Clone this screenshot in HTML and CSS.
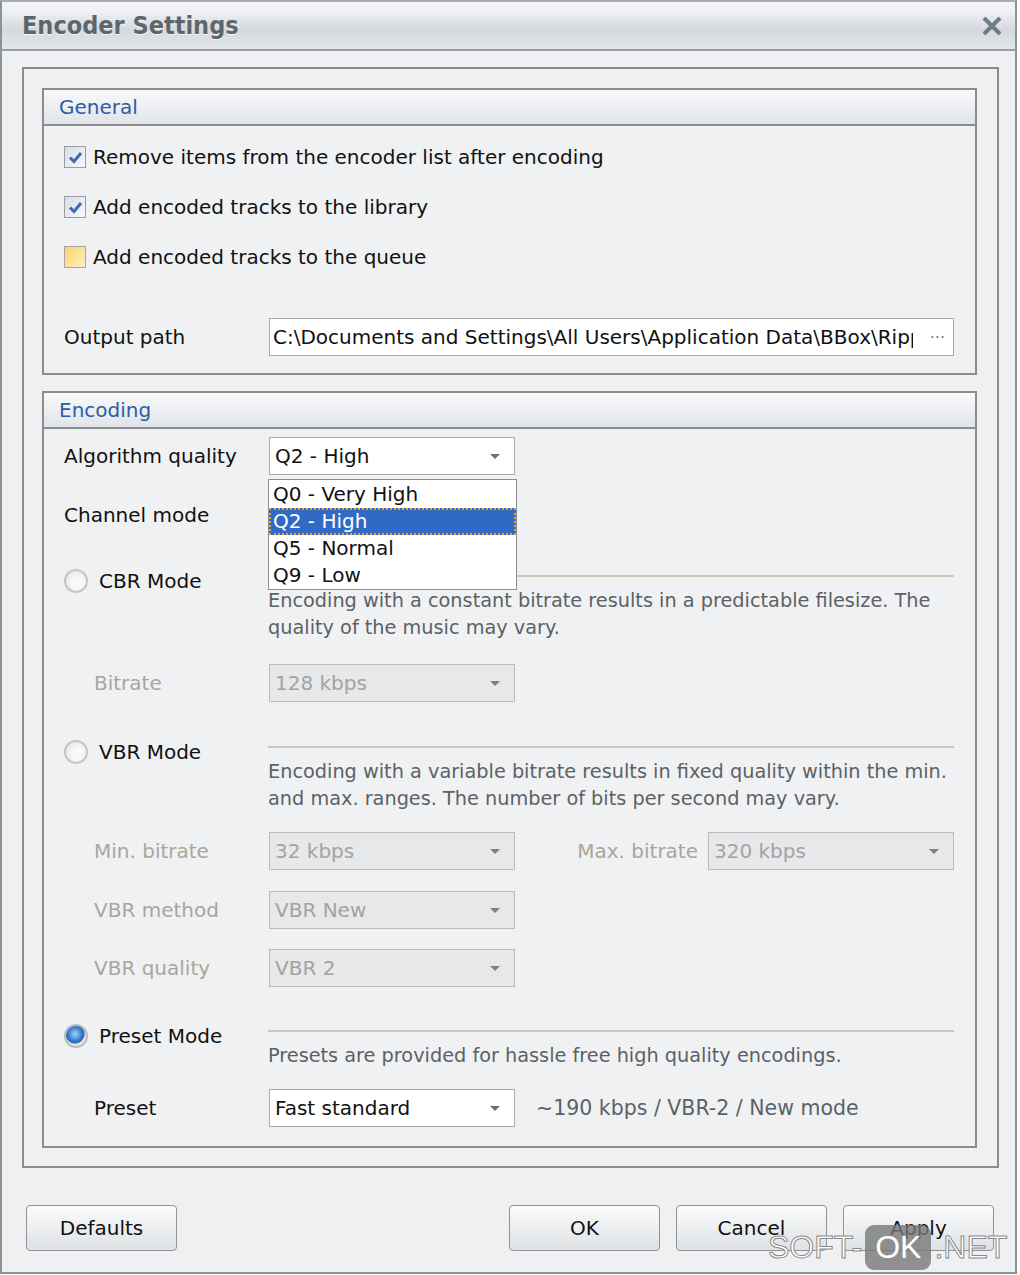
FILE: index.html
```html
<!DOCTYPE html>
<html lang="en">

<head>
    <meta charset="UTF-8">
    <title>Encoder Settings</title>
    <link rel="stylesheet" href="styles.css">
</head>

<body>
    <div class="window">
        <div class="titlebar">
            <span class="title">Encoder Settings</span>
            <svg class="close" width="22" height="20" viewBox="0 0 22 20">
                <path d="M3 2 L19 18 M19 2 L3 18" stroke="#6f7d89" stroke-width="4" fill="none" />
            </svg>
        </div>

        <div class="panel">
            <!-- General -->
            <section class="group">
                <div class="group-head">General</div>
                <div class="group-body general">
                    <div class="check-row">
                        <span class="checkbox checked">
                            <svg width="15" height="15" viewBox="0 0 15 15"><path d="M2 7.5 L6 11.5 L13 3" stroke="#3f6aab" stroke-width="3" fill="none" /></svg>
                        </span>
                        Remove items from the encoder list after encoding
                    </div>
                    <div class="check-row">
                        <span class="checkbox checked">
                            <svg width="15" height="15" viewBox="0 0 15 15"><path d="M2 7.5 L6 11.5 L13 3" stroke="#3f6aab" stroke-width="3" fill="none" /></svg>
                        </span>
                        Add encoded tracks to the library
                    </div>
                    <div class="check-row">
                        <span class="checkbox hover"></span>
                        Add encoded tracks to the queue
                    </div>

                    <div class="field-row path-row">
                        <span class="field-label">Output path</span>
                        <div class="textbox">
                            <span class="path-text">C:\Documents and Settings\All Users\Application Data\BBox\Ripped</span>
                            <span class="dots">···</span>
                        </div>
                    </div>
                </div>
            </section>

            <!-- Encoding -->
            <section class="group">
                <div class="group-head">Encoding</div>
                <div class="group-body encoding">
                    <div class="field-row alg-row">
                        <span class="field-label">Algorithm quality</span>
                        <div class="combo-wrap">
                            <div class="combo">Q2 - High<span class="arrow"></span></div>
                            <ul class="droplist">
                                <li>Q0 - Very High</li>
                                <li class="selected">Q2 - High</li>
                                <li>Q5 - Normal</li>
                                <li>Q9 - Low</li>
                            </ul>
                        </div>
                    </div>

                    <div class="field-row channel-row">
                        <span class="field-label">Channel mode</span>
                    </div>

                    <div class="mode">
                        <div class="mode-label"><span class="radio"></span>CBR Mode</div>
                        <div class="mode-info">
                            <div class="sep"></div>
                            <p class="desc">Encoding with a constant bitrate results in a predictable filesize. The<br>quality of the music may vary.</p>
                        </div>
                    </div>

                    <div class="field-row sub cbr-bitrate">
                        <span class="field-label">Bitrate</span>
                        <div class="combo disabled">128 kbps<span class="arrow"></span></div>
                    </div>

                    <div class="mode vbr">
                        <div class="mode-label"><span class="radio"></span>VBR Mode</div>
                        <div class="mode-info">
                            <div class="sep"></div>
                            <p class="desc">Encoding with a variable bitrate results in fixed quality within the min.<br>and max. ranges. The number of bits per second may vary.</p>
                        </div>
                    </div>

                    <div class="field-row sub min-row">
                        <span class="field-label">Min. bitrate</span>
                        <div class="combo disabled">32 kbps<span class="arrow"></span></div>
                        <span class="max-label">Max. bitrate</span>
                        <div class="combo disabled">320 kbps<span class="arrow"></span></div>
                    </div>

                    <div class="field-row sub method-row">
                        <span class="field-label">VBR method</span>
                        <div class="combo disabled">VBR New<span class="arrow"></span></div>
                    </div>

                    <div class="field-row sub quality-row">
                        <span class="field-label">VBR quality</span>
                        <div class="combo disabled">VBR 2<span class="arrow"></span></div>
                    </div>

                    <div class="mode preset">
                        <div class="mode-label"><span class="radio on"></span>Preset Mode</div>
                        <div class="mode-info">
                            <div class="sep"></div>
                            <p class="desc">Presets are provided for hassle free high quality encodings.</p>
                        </div>
                    </div>

                    <div class="field-row sub active preset-row">
                        <span class="field-label">Preset</span>
                        <div class="combo">Fast standard<span class="arrow"></span></div>
                        <span class="preset-note">~190 kbps / VBR-2 / New mode</span>
                    </div>
                </div>
            </section>
        </div>

        <div class="buttons">
            <button class="btn">Defaults</button>
            <div class="btn-group">
                <button class="btn">OK</button>
                <button class="btn">Cancel</button>
                <button class="btn">Apply</button>
            </div>
        </div>

        <div class="watermark">
            <span>SOFT-</span><span class="ok">OK</span><span>.NET</span>
        </div>
    </div>
</body>

</html>
```

FILE: styles.css
```css
* {
    margin: 0;
    padding: 0;
    box-sizing: border-box;
}

body {
    background-color: #ffffff;
    font-family: "DejaVu Sans", sans-serif;
    font-size: 20px;
    color: #111111;
}

.window {
    width: 1017px;
    height: 1274px;
    border: 2px solid #8e9296;
    border-top-color: #a9adb1;
    background-color: #eff0f2;
    position: relative;
}

/* title bar */
.titlebar {
    height: 49px;
    border-bottom: 2px solid #9ca0a4;
    background: linear-gradient(#f4f5f7 0%, #eef0f2 22%, #d5d9de 58%, #e3e6e9 100%);
    display: flex;
    align-items: center;
    justify-content: space-between;
    padding: 0 12px 0 20px;
}

.title {
    font-family: "DejaVu Sans Condensed", "DejaVu Sans", sans-serif;
    font-stretch: condensed;
    font-weight: bold;
    font-size: 25px;
    color: #5d656d;
    text-shadow: 0 1px 0 #f5f6f7;
}

/* main panel */
.panel {
    margin: 16px 0 0 20px;
    width: 977px;
    border: 2px solid #8a8d90;
    padding: 19px 20px 18px 18px;
}

.group {
    border: 2px solid #8a8d90;
    background-color: #f0f1f3;
}

.group+.group {
    margin-top: 16px;
}

.group-head {
    height: 36px;
    border-bottom: 2px solid #8a8d90;
    background: linear-gradient(#f8f9fa, #e1e4e8);
    color: #2d5ca6;
    font-size: 20px;
    line-height: 34px;
    padding-left: 15px;
}

.group-body {
    padding: 6px 21px 17px 20px;
}

/* checkboxes */
.check-row {
    height: 50px;
    display: flex;
    align-items: center;
    gap: 7px;
}

.checkbox {
    width: 22px;
    height: 22px;
    border: 1px solid #9a9ea2;
    display: flex;
    align-items: center;
    justify-content: center;
}

.checkbox.checked {
    background: linear-gradient(135deg, #d9dee6, #f7f8fa);
}

.checkbox.hover {
    background: linear-gradient(135deg, #fbd36a, #fdf0c4);
    border-color: #a6a6a6;
}

/* rows with a label column */
.field-row {
    display: flex;
    align-items: center;
    height: 38px;
}

.field-label {
    width: 205px;
    flex-shrink: 0;
}

.path-row {
    margin-top: 36px;
}

.textbox {
    flex: 1;
    height: 38px;
    background: #ffffff;
    border: 1px solid #a9acaf;
    display: flex;
    align-items: center;
    padding: 0 8px 0 3px;
}

.path-text {
    width: 640px;
    overflow: hidden;
    white-space: nowrap;
}

.dots {
    margin-left: auto;
    color: #777;
    font-size: 16px;
}

/* combos */
.combo {
    width: 246px;
    height: 38px;
    background: #ffffff;
    border: 1px solid #a9acaf;
    display: flex;
    align-items: center;
    padding-left: 5px;
    position: relative;
}

.combo.disabled {
    background: #e7e8ea;
    border-color: #b9bcbf;
    color: #a3a3a3;
}

.arrow {
    position: absolute;
    right: 14px;
    top: 16px;
    border-left: 5px solid transparent;
    border-right: 5px solid transparent;
    border-top: 5px solid #6b6e72;
}

.disabled .arrow {
    border-top-color: #7d8084;
}

.combo-wrap {
    position: relative;
}

.droplist {
    list-style: none;
    position: absolute;
    top: 42px;
    left: -1px;
    width: 249px;
    height: 111px;
    background: #ffffff;
    border: 1px solid #8c8f92;
    padding-top: 1px;
    z-index: 2;
}

.droplist li {
    height: 27px;
    line-height: 27px;
    padding-left: 4px;
}

.droplist li.selected {
    background-color: #316ac5;
    color: #ffffff;
    outline: 2px dotted #e8a33a;
    outline-offset: -2px;
}

/* encoding section spacing */
.encoding {
    padding-top: 8px;
    padding-bottom: 19px;
}

.channel-row {
    margin-top: 20px;
    height: 40px;
}

.mode {
    display: flex;
    margin-top: 32px;
}

.mode.vbr {
    margin-top: 36px;
}

.mode.preset {
    margin-top: 35px;
}

.mode-label {
    width: 204px;
    flex-shrink: 0;
    height: 26px;
    display: flex;
    align-items: center;
    gap: 11px;
    margin-top: 1px;
}

.radio {
    width: 24px;
    height: 24px;
    border-radius: 50%;
    border: 2px solid #c3c6c9;
    background: radial-gradient(circle at 60% 60%, #f7f8f9 30%, #e0e3e6 100%);
}

.radio.on {
    border-color: #b8bdc2;
    background: radial-gradient(circle at 45% 40%, #9fd0ff 0%, #3a83d0 40%, #2a66b0 55%, #e4e7ea 62%, #f5f6f7 100%);
}

.mode-info {
    flex: 1;
    padding-top: 8px;
}

.sep {
    height: 2px;
    background-color: #cfc5b6;
}

.desc {
    margin-top: 10px;
    line-height: 27px;
    color: #5c6166;
    font-size: 19.3px;
    white-space: nowrap;
}

.sub .field-label {
    padding-left: 30px;
    color: #aaa59d;
}

.sub.active .field-label {
    color: #111111;
}

.cbr-bitrate {
    margin-top: 23px;
}

.min-row {
    margin-top: 20px;
}

.max-label {
    width: 193px;
    text-align: right;
    padding-right: 10px;
    color: #aaa59d;
}

.method-row {
    margin-top: 21px;
}

.quality-row {
    margin-top: 20px;
}

.preset-row {
    margin-top: 20px;
}

.preset-note {
    margin-left: 21px;
    color: #5c6166;
    font-size: 20.5px;
}

/* buttons */
.buttons {
    display: flex;
    justify-content: space-between;
    margin: 37px 21px 0 24px;
}

.btn-group {
    display: flex;
    gap: 16px;
}

.btn {
    width: 151px;
    height: 46px;
    font-family: "DejaVu Sans", sans-serif;
    font-size: 20px;
    color: #111111;
    border: 1px solid #8f9397;
    border-radius: 4px;
    background: linear-gradient(#fbfbfc 0%, #eceef0 50%, #dfe2e5 100%);
}

/* site watermark over the buttons */
.watermark {
    position: absolute;
    left: 766px;
    top: 1223px;
    display: flex;
    align-items: center;
    gap: 3px;
    font-family: "Liberation Sans", sans-serif;
    font-size: 32px;
    color: #ffffff;
    -webkit-text-stroke: 1px #8a8a8a;
}

.watermark .ok {
    background-color: rgba(120, 120, 120, 0.8);
    border-radius: 9px;
    padding: 4px 10px;
    -webkit-text-stroke: 0;
}
```
